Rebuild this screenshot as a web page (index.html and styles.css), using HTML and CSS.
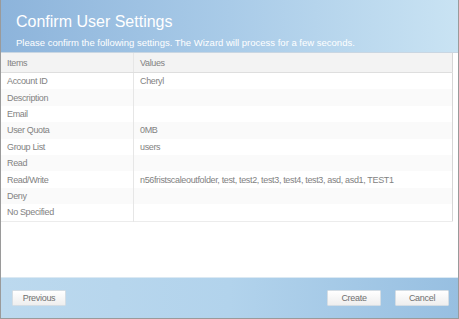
FILE: index.html
```html
<!DOCTYPE html>
<html lang="en">
<head>
    <meta charset="UTF-8">
    <title>Confirm User Settings</title>
    <link rel="stylesheet" href="styles.css">
</head>
<body>
    <div class="wizard">
        <div class="wizard-head">
            <h1>Confirm User Settings</h1>
            <p class="subtitle">Please confirm the following settings. The Wizard will process for a few seconds.</p>
        </div>

        <div class="wizard-body">
            <table class="summary">
                <thead>
                    <tr>
                        <th class="col-item">Items</th>
                        <th>Values</th>
                    </tr>
                </thead>
                <tbody>
                    <tr><td>Account ID</td><td>Cheryl</td></tr>
                    <tr><td>Description</td><td></td></tr>
                    <tr><td>Email</td><td></td></tr>
                    <tr><td>User Quota</td><td>0MB</td></tr>
                    <tr><td>Group List</td><td>users</td></tr>
                    <tr><td>Read</td><td></td></tr>
                    <tr><td>Read/Write</td><td>n56fristscaleoutfolder, test, test2, test3, test4, test3, asd, asd1, TEST1</td></tr>
                    <tr><td>Deny</td><td></td></tr>
                    <tr><td>No Specified</td><td></td></tr>
                </tbody>
            </table>
        </div>

        <div class="wizard-foot">
            <button class="btn">Previous</button>
            <div class="actions">
                <button class="btn">Create</button>
                <button class="btn">Cancel</button>
            </div>
        </div>
    </div>
</body>
</html>
```

FILE: styles.css
```css
html, body {
    margin: 0;
    padding: 0;
    height: 100%;
}
body {
    font-family: "Liberation Sans", Arial, sans-serif;
    background: #ffffff;
}
.wizard {
    height: 319px;
    width: 459px;
    box-sizing: border-box;
    border: 1px solid #9a9a9a;
    border-top: none;
    display: flex;
    flex-direction: column;
    background: #fff;
}
.wizard-head {
    height: 53px;
    box-sizing: border-box;
    padding: 12px 0 0 15px;
    background: linear-gradient(to right, #8db4db 0%, #a9cbe8 50%, #c9e3f3 100%);
    border-bottom: 1px solid #c9d6e2;
}
.wizard-head h1 {
    margin: 0;
    font-size: 16px;
    font-weight: normal;
    color: #ffffff;
    line-height: 20px;
}
.subtitle {
    margin: 5px 0 0 0;
    font-size: 9.5px;
    color: #ffffff;
    line-height: 11px;
}
.wizard-body {
    flex: 1;
    padding: 0 5px 0 0;
}
.summary {
    width: 100%;
    border-collapse: collapse;
    font-size: 9px;
    letter-spacing: -0.35px;
    color: #828282;
    border-right: 1px solid #d6d6d6;
    border-bottom: 1px solid #ececec;
}
.summary th {
    text-align: left;
    font-weight: normal;
    height: 19px;
    padding: 0 5px 0 6px;
    background: #f3f3f3;
    border-bottom: 1px solid #dedede;
}
.summary th.col-item,
.summary td:first-child {
    width: 121px;
    border-right: 1px solid #e6e6e6;
}
.summary td {
    height: 16.4px;
    padding: 0 5px 0 6px;
    white-space: nowrap;
}
.summary tbody tr:nth-child(even) td {
    background: #fafafa;
}
.wizard-foot {
    height: 41px;
    box-sizing: border-box;
    padding: 0 9px 0 11px;
    display: flex;
    align-items: center;
    justify-content: space-between;
    background: linear-gradient(to right, #bcd9ee 0%, #b2d3ec 50%, #97bfe1 100%);
    border-top: 1px solid #dbe9f3;
}
.actions {
    display: flex;
    gap: 14px;
}
.btn {
    width: 54px;
    height: 16px;
    padding: 0;
    font-family: "Liberation Sans", Arial, sans-serif;
    font-size: 9px;
    letter-spacing: -0.3px;
    color: #707070;
    background: linear-gradient(#ffffff, #eeeeee);
    border: 1px solid #d4dde4;
    border-radius: 1px;
}
```
